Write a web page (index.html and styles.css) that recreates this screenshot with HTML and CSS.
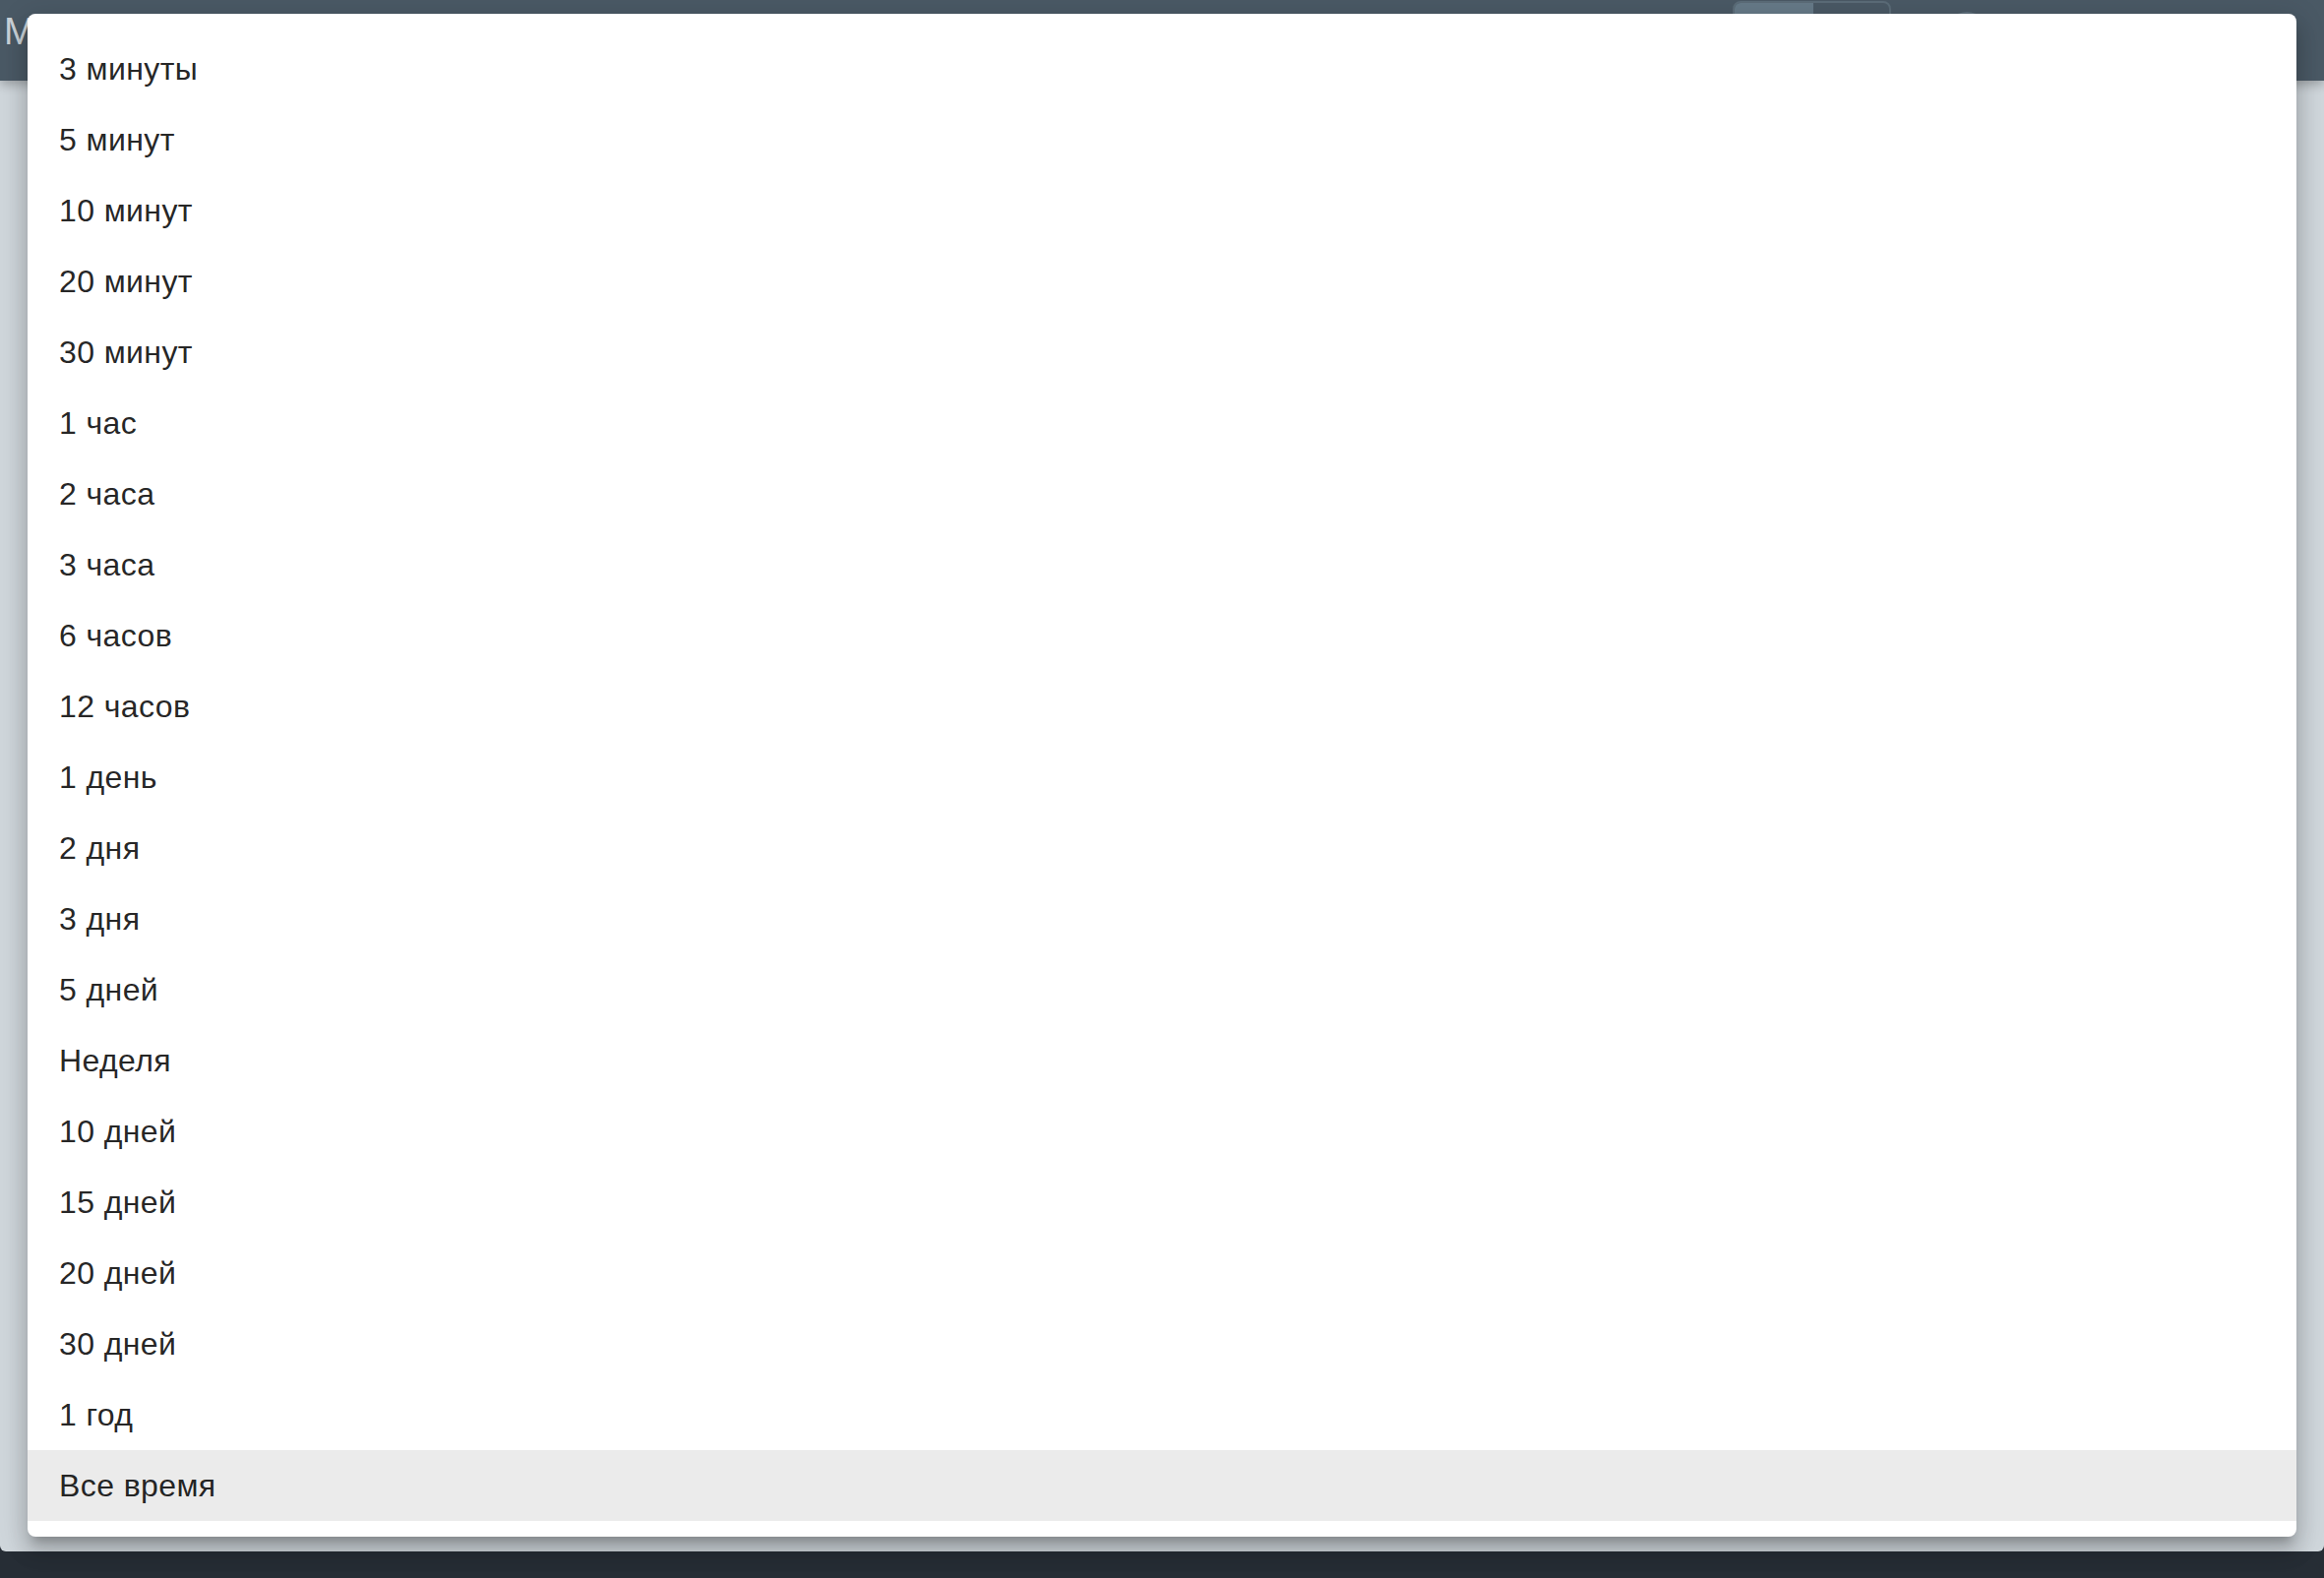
FILE: index.html
```html
<!DOCTYPE html>
<html lang="ru">
<head>
  <meta charset="UTF-8" />
  <meta name="viewport" content="width=device-width, initial-scale=1" />
  <title>Мониторинг</title>
  <link rel="stylesheet" href="styles.css">
</head>
<body>

<div class="page">
  <header class="topbar">
    <h1 class="title">Мониторинг</h1>
    <div class="toggle-group">
      <span class="toggle active"></span>
      <span class="toggle"></span>
    </div>
    <span class="avatar"></span>
  </header>
  <main class="content"></main>
</div>

<ul class="menu">
  <li>3 минуты</li>
  <li>5 минут</li>
  <li>10 минут</li>
  <li>20 минут</li>
  <li>30 минут</li>
  <li>1 час</li>
  <li>2 часа</li>
  <li>3 часа</li>
  <li>6 часов</li>
  <li>12 часов</li>
  <li>1 день</li>
  <li>2 дня</li>
  <li>3 дня</li>
  <li>5 дней</li>
  <li>Неделя</li>
  <li>10 дней</li>
  <li>15 дней</li>
  <li>20 дней</li>
  <li>30 дней</li>
  <li>1 год</li>
  <li class="selected">Все время</li>
</ul>

</body>
</html>
```

FILE: styles.css
```css
* {
  margin: 0;
  padding: 0;
  box-sizing: border-box;
}

body {
  font-family: 'Liberation Sans', Arial, sans-serif;
  background: #262d35;
  height: 1604px;
  overflow: hidden;
}

.page {
  height: 1577px;
  background: #cfd6db;
  border-radius: 0 0 6px 6px;
  overflow: hidden;
  display: flex;
  flex-direction: column;
}

.topbar {
  height: 82px;
  background: #4a5965;
  display: flex;
  align-items: flex-start;
  padding-left: 4px;
  box-shadow: 0 4px 10px rgba(0,0,0,0.25);
}

.title {
  font-size: 38px;
  font-weight: normal;
  color: #c9d1d7;
  line-height: 1;
  margin-top: 13px;
}

.toggle-group {
  display: flex;
  margin-left: auto;
  margin-top: 1px;
  height: 52px;
  border: 2px solid #5b6c78;
  border-radius: 8px;
  overflow: hidden;
}

.toggle {
  width: 77px;
}

.toggle.active {
  width: 80px;
  background: #667a88;
}

.avatar {
  width: 44px;
  height: 44px;
  border-radius: 50%;
  background: #5f707d;
  margin: 12px 341px 0 55px;
}

.content {
  flex: 1;
}

.menu {
  position: absolute;
  left: 28px;
  top: 14px;
  width: 2306px;
  height: 1548px;
  list-style: none;
  background: white;
  border-radius: 8px;
  padding: 20px 0 16px;
  box-shadow: 0 10px 10px -6px rgba(0,0,0,0.2),
              0 16px 20px 2px rgba(0,0,0,0.14),
              0 6px 28px 4px rgba(0,0,0,0.12);
}

.menu li {
  height: 72px;
  display: flex;
  align-items: center;
  padding-left: 32px;
  font-size: 32px;
  letter-spacing: 0.4px;
  color: rgba(0,0,0,0.87);
}

.menu li.selected {
  background: #ebebeb;
}
```
